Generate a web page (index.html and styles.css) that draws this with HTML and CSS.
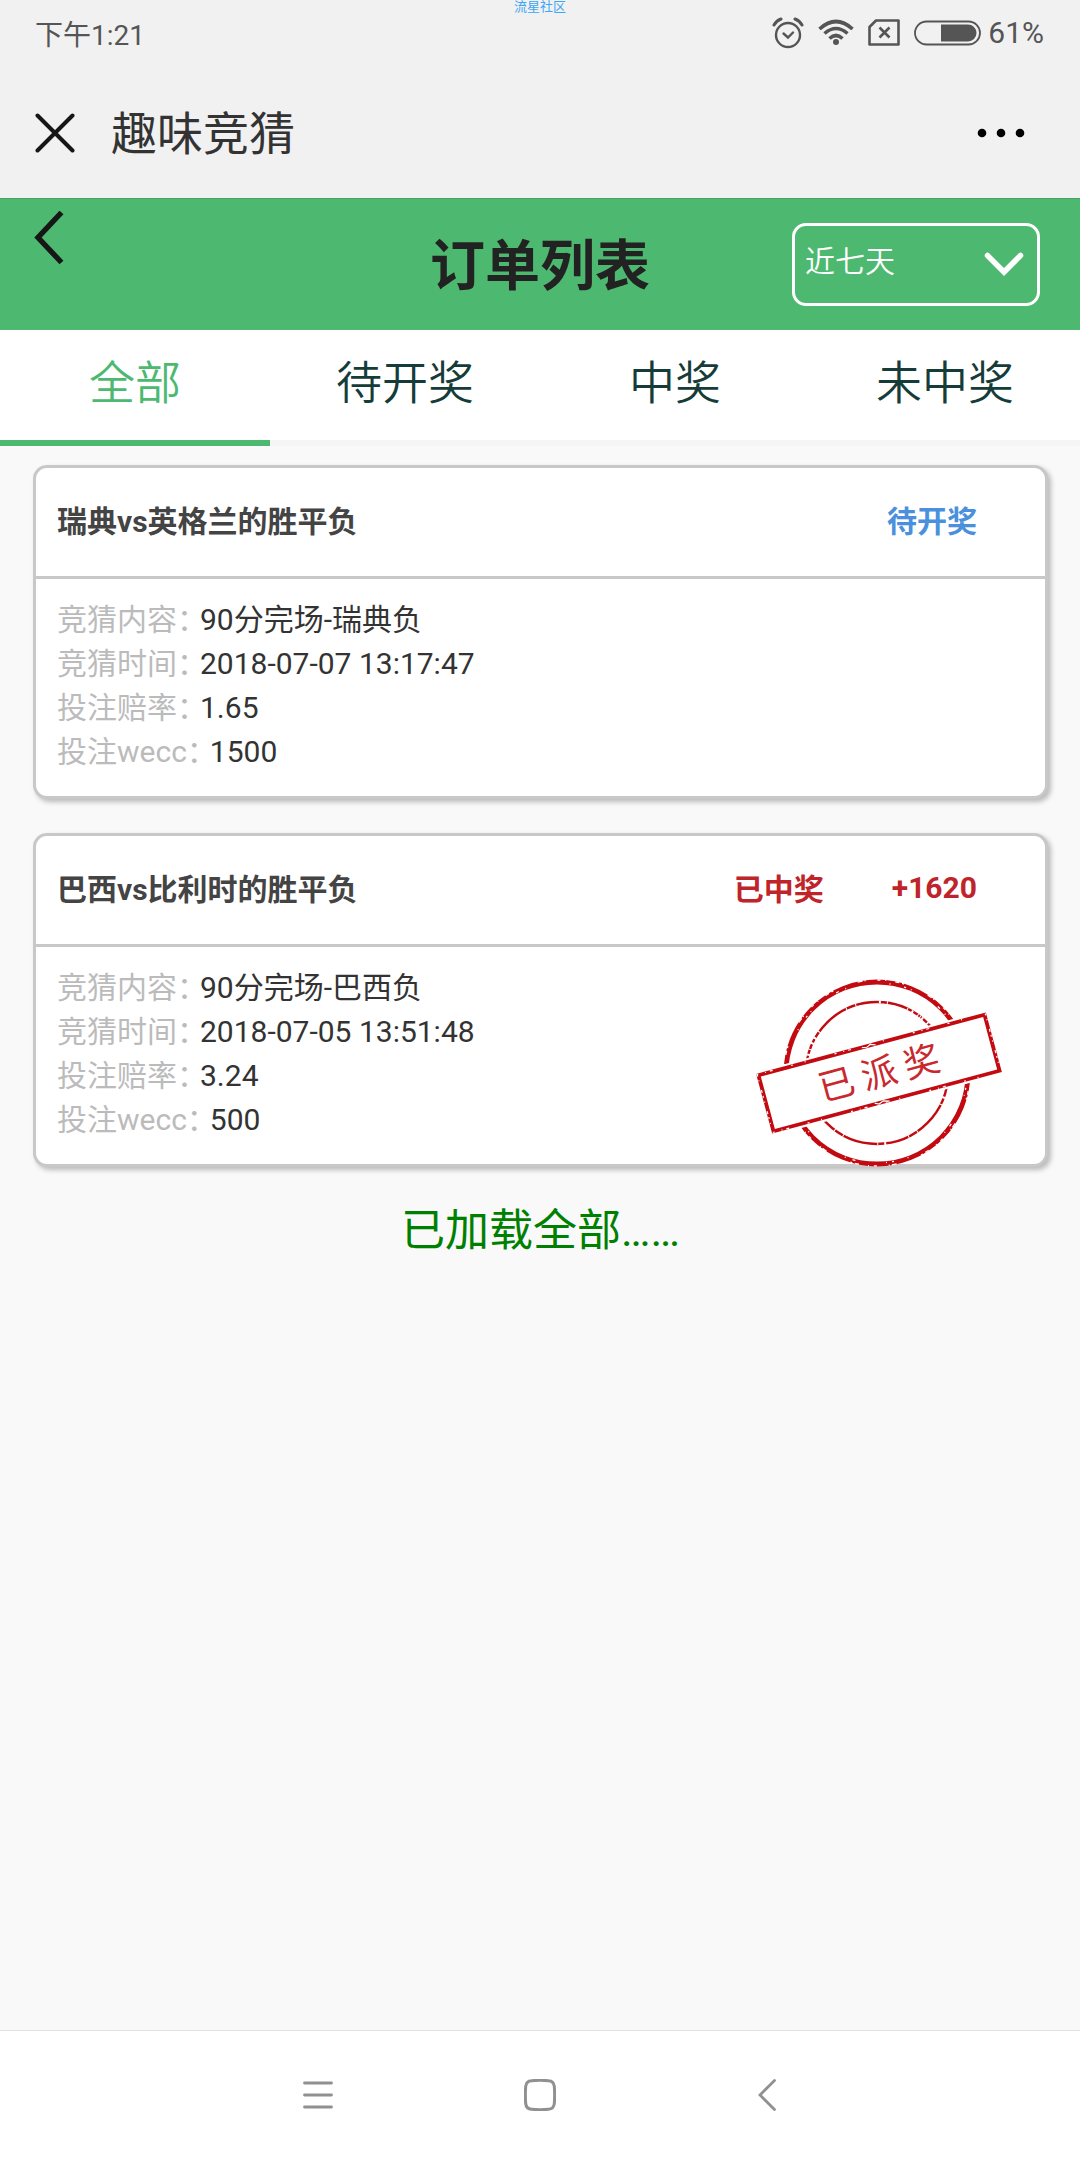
FILE: index.html
```html
<!DOCTYPE html>
<html lang="zh-CN">
<head>
  <meta charset="UTF-8" />
  <meta name="viewport" content="width=device-width, initial-scale=1.0"/>
  <title>订单列表</title>
  <link rel="stylesheet" href="styles.css">
</head>
<body>
  <div class="watermark">流星社区</div>

  <!-- Phone status bar -->
  <div class="status-bar">
    <span>下午1:21</span>
    <div class="status-icons">
      <svg width="32" height="32" viewBox="0 0 32 32" fill="none" stroke="#555" stroke-width="2.4" stroke-linecap="round">
        <circle cx="16" cy="18" r="12"/>
        <path d="M11.5 16.5l4.500 4 5-5"/>
        <path d="M2 8q2.500-4.500 7-6M30 8q-2.500-4.500-7-6" stroke-width="3"/>
      </svg>
      <svg class="wifi" width="36" height="32" viewBox="0 0 36 32" fill="none" stroke="#555" stroke-width="3.600">
        <path d="M1.500 12Q18-3 34.500 12M6.500 16.500Q18 6.500 29.500 16.500M11.500 21.500Q18 15.500 24.500 21.500"/>
        <circle cx="18" cy="25" r="3" fill="#555" stroke="none"/>
      </svg>
      <svg width="32" height="32" viewBox="0 0 32 32" fill="none" stroke="#555" stroke-width="2.600" stroke-linejoin="round">
        <path d="M1.500 10L8 3.500h22.500v24h-29z"/>
        <path d="M11.500 10.500l10 10M21.500 10.500l-10 10"/>
      </svg>
      <svg class="battery" width="67" height="32" viewBox="0 0 67 32">
        <rect x="1" y="4.500" width="65" height="23" rx="11.500" fill="none" stroke="#555" stroke-width="1.800"/>
        <path d="M27 7.500h27a8.500 8.500 0 0 1 0 17H27z" fill="#555"/>
      </svg>
      <span class="percent">61%</span>
    </div>
  </div>

  <div class="app-bar">
    <button class="icon-btn" aria-label="关闭">
      <svg width="40" height="40" viewBox="0 0 40 40" stroke="#161616" stroke-width="4" stroke-linecap="round">
        <path d="M2.500 2.500l35 35M37.500 2.500l-35 35"/>
      </svg>
    </button>
    <span class="app-title">趣味竞猜</span>
    <button class="icon-btn more" aria-label="更多">
      <svg width="48" height="10" viewBox="0 0 48 10">
        <circle cx="5" cy="5" r="4.300"/><circle cx="24" cy="5" r="4.300"/><circle cx="43" cy="5" r="4.300"/>
      </svg>
    </button>
  </div>

  <header>
    <button class="icon-btn back" aria-label="返回">
      <svg width="30" height="54" viewBox="0 0 30 54" fill="none" stroke="#161616" stroke-width="5.400">
        <path d="M27.500 1.500L4 26.500l23.500 25"/>
      </svg>
    </button>
    <h1>订单列表</h1>
    <div class="range">
      <select aria-label="时间范围">
        <option>近七天</option>
        <option>近一个月</option>
      </select>
      <svg width="40" height="24" viewBox="0 0 40 24" fill="none" stroke="#fff" stroke-width="5.500" stroke-linecap="round">
        <path d="M3.500 3.500L20 20 36.500 3.500"/>
      </svg>
    </div>
  </header>

  <nav class="tabs">
    <a href="#all" class="active">全部</a>
    <a href="#pending">待开奖</a>
    <a href="#won">中奖</a>
    <a href="#lost">未中奖</a>
  </nav>

  <main>
    <section class="order">
      <div class="order-head">
        <h2>瑞典vs英格兰的胜平负</h2>
        <span class="pending">待开奖</span>
      </div>
      <dl>
        <div><dt>竞猜内容：</dt><dd>90分完场-瑞典负</dd></div>
        <div><dt>竞猜时间：</dt><dd>2018-07-07 13:17:47</dd></div>
        <div><dt>投注赔率：</dt><dd>1.65</dd></div>
        <div><dt>投注wecc：</dt><dd>1500</dd></div>
      </dl>
    </section>

    <section class="order">
      <div class="order-head">
        <h2>巴西vs比利时的胜平负</h2>
        <span class="won">已中奖</span>
        <span class="won">+1620</span>
      </div>
      <dl>
        <div><dt>竞猜内容：</dt><dd>90分完场-巴西负</dd></div>
        <div><dt>竞猜时间：</dt><dd>2018-07-05 13:51:48</dd></div>
        <div><dt>投注赔率：</dt><dd>3.24</dd></div>
        <div><dt>投注wecc：</dt><dd>500</dd></div>
      </dl>
      <!-- Paid stamp -->
      <svg class="stamp" width="248" height="190" viewBox="-124 -95 248 190" fill="none" stroke="#c20a10">
        <g transform="translate(-2 0)">
          <circle r="91" stroke-width="4.800"/>
          <circle r="71" stroke-width="2.400"/>
          <!-- worn spots in the ink -->
          <g stroke="#fff" stroke-width="1.300">
            <circle r="93" stroke-dasharray="3 5 1 9 4 3 2 26 5 2 1 12"/>
            <circle r="90" stroke-dasharray="1 14 2 5 1 31 3 7 1 44"/>
            <circle r="71" stroke-width="3" stroke-dasharray="1 23 2 6 1 35 1 9"/>
            <path d="M-62-35A71 71 0 0 0-69-16M30-64A71 71 0 0 1 53-47" stroke-width="3" stroke-dasharray="1 4 2 5"/>
          </g>
        </g>
        <g transform="rotate(-15)">
          <rect x="-121" y="-33" width="242" height="66" fill="#fff" stroke="none"/>
          <rect x="-117" y="-29" width="234" height="58" stroke-width="3.800"/>
          <g stroke="#fff" stroke-width="1.200">
            <path d="M-119-30H119M-118 30H119" stroke-dasharray="2 7 1 4 3 19 2 12 1 30"/>
            <path d="M-118-30V30M118-30V30" stroke-dasharray="2 4 1 9 3 3"/>
            <path d="M-10-29l5 1 4-2 5 2M-12 28l4 2 5-2 6 2"/>
          </g>
          <text class="stamp-text" x="-44 0 44" y="13">已派奖</text>
        </g>
      </svg>
    </section>

    <p class="loaded">已加载全部……</p>
  </main>

  <footer>
    <button class="icon-btn" aria-label="菜单">
      <svg width="32" height="32" viewBox="0 0 32 32" stroke="#909090" stroke-width="2.800" stroke-linecap="round">
        <path d="M2.500 4h27M2.500 16h27M2.500 28h27"/>
      </svg>
    </button>
    <button class="icon-btn" aria-label="主页">
      <svg width="32" height="32" viewBox="0 0 32 32" fill="none" stroke="#909090" stroke-width="3">
        <path d="M7.500 1.700Q16 1 24.500 1.700 29.800 2 30.300 7.500 31 16 30.300 24.500 29.800 30 24.500 30.300 16 31 7.500 30.300 2.200 30 1.700 24.500 1 16 1.700 7.500 2.200 2 7.500 1.700z"/>
      </svg>
    </button>
    <button class="icon-btn" aria-label="返回">
      <svg width="32" height="32" viewBox="0 0 32 32" fill="none" stroke="#909090" stroke-width="2.800" stroke-linecap="round">
        <path d="M28.500 1.500L14 16l14.500 14.500"/>
      </svg>
    </button>
  </footer>
</body>
</html>
```

FILE: styles.css
```css
* { box-sizing: border-box; margin: 0; padding: 0; }
body {
  font-family: Roboto, "Noto Sans CJK SC", sans-serif;
  background: #f9f9f9; color: #333;
  min-height: 100vh; display: flex; flex-direction: column;
}
svg { display: block; flex: none; }
.icon-btn { background: none; border: none; cursor: pointer; }

.watermark {
  position: absolute; top: 0; left: 0; right: 0;
  text-align: center; font-size: 13px; line-height: 13px; color: #3fa5f5;
}

/* Status bar and app bar */
.status-bar {
  display: flex; justify-content: space-between; align-items: center;
  height: 65px; padding: 0 36px 0 35px; background: #f1f1f1;
  font-size: 28px; color: #555;
}
.status-icons { display: flex; align-items: center; gap: 14px; }
.battery { margin-right: -7px; }
.percent { font-size: 30px; }
.app-bar {
  display: flex; align-items: center; height: 133px; padding: 2px 55px 0 35px;
  background: #f1f1f1;
}
.app-title { margin-left: 36px; font-size: 46px; line-height: 64px; padding-top: 2px; }
.more { margin-left: auto; }

/* Page header */
header {
  display: grid; grid-template-columns: 1fr auto 1fr; align-items: center;
  height: 132px; padding: 0 40px;
  background: #4db870; border-top: 1px solid #45a565;
}
header h1 { font-size: 55px; line-height: 64px; padding-top: 2px; color: #222; }
.back { justify-self: start; align-self: start; padding-top: 12px; margin-left: -6px; }
.range { position: relative; justify-self: end; width: 248px; }
.range select {
  appearance: none; display: block; width: 100%; height: 83px; padding: 0 60px 6px 10px;
  font-family: inherit; font-size: 30px; font-weight: 350; color: #fff;
  background: none; border: 3px solid #fff; border-radius: 14px;
}
.range svg { position: absolute; right: 16px; top: 29px; pointer-events: none; }

/* Tabs */
.tabs { display: flex; background: #fff; }
.tabs a {
  flex: 1; height: 116px; padding-top: 19px; text-align: center;
  font-size: 46px; font-weight: 350; line-height: 68px;
  color: #163c3a; text-decoration: none; border-bottom: 6px solid #f5f5f5;
}
.tabs a.active { color: #4db870; border-color: #4db870; }

/* Orders */
main { flex: 1; padding: 19px 32px 0 33px; }
.order {
  position: relative; margin-bottom: 34px; background: #fff;
  border: 3px solid #c8c8c8; border-radius: 14px;
  box-shadow: 3px 3px 5px rgba(0,0,0,0.25);
}
.order-head {
  display: flex; align-items: center; gap: 68px;
  height: 111px; padding: 0 68px 6px 21px; border-bottom: 3px solid #c8c8c8;
  font-size: 30px; font-weight: bold;
}
.order-head h2 { font-size: 30px; color: #444; margin-right: auto; }
.pending { color: #4a90dc; }
.won { color: #c0242b; }
dl { padding: 19px 21px 22px; font-size: 30px; line-height: 44px; }
dl div { display: flex; height: 44px; }
dt { color: #bbb; font-feature-settings: "halt"; margin-right: 8px; }
.stamp { position: absolute; right: 42px; bottom: -4px; }
.stamp-text {
  font-size: 36px; fill: #c8282e; stroke: none; text-anchor: middle;
}
.loaded { text-align: center; font-size: 44px; line-height: 60px; color: #008000; }

/* Bottom navigation */
footer {
  display: flex; justify-content: center; align-items: center; gap: 190px;
  height: 130px; padding-bottom: 2px; background: #fff; border-top: 1px solid #e2e2e2;
}
```
